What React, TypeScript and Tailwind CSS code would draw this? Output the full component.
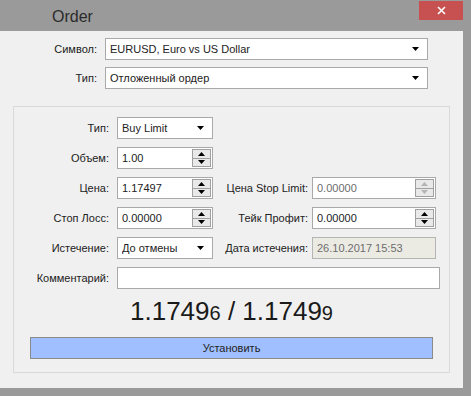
import React from 'react';

const font = { fontFamily: '"Liberation Sans", Arial, sans-serif' };

const Arrow = ({ up = false, color = '#000' }: { up?: boolean; color?: string }) => (
  <svg width="7" height="4" viewBox="0 0 7 4">
    <polygon points={up ? '0,4 7,4 3.5,0' : '0,0 7,0 3.5,4'} fill={color} />
  </svg>
);

const Select = ({ value, className = '' }: { value: string; className?: string }) => (
  <div className={`h-[22px] border border-[#a9a9a9] bg-white flex items-center pl-[4px] pr-[8px] ${className}`}>
    <span className="flex-1 truncate">{value}</span>
    <Arrow />
  </div>
);

const Spin = ({ disabled = false }: { disabled?: boolean }) => {
  const c = disabled ? '#b5b5b5' : '#000';
  return (
    <div className="w-[19px] h-[18px] border border-[#a0a0a0] bg-[#e9e9e9] flex flex-col">
      <div className="flex-1 flex items-center justify-center border-b border-[#a0a0a0]">
        <Arrow up color={c} />
      </div>
      <div className="flex-1 flex items-center justify-center">
        <Arrow color={c} />
      </div>
    </div>
  );
};

const SpinInput = ({ value, disabled = false, className = '' }: { value: string; disabled?: boolean; className?: string }) => (
  <div className={`h-[22px] border border-[#a9a9a9] bg-white flex items-center pl-[4px] pr-[1px] ${className}`}>
    <span className={`flex-1 ${disabled ? 'text-[#6d6d6d]' : ''}`}>{value}</span>
    <Spin disabled={disabled} />
  </div>
);

const Label = ({ children, className = '' }: { children: React.ReactNode; className?: string }) => (
  <div className={`text-right ${className}`}>{children}</div>
);

export default function App() {
  return (
    <div className="w-[471px] h-[396px] bg-[#9a9a9a] flex flex-col text-[11px] text-[#222]" style={font}>
      {/* title bar */}
      <div className="h-[31px] flex items-start">
        <div className="ml-[52px] mt-[5px] text-[16px] text-[#2b2b2b]">Order</div>
        <div className="ml-auto mr-[8px] mt-[1px] w-[44px] h-[19px] bg-[#c75050] flex items-center justify-center">
          <svg width="9" height="9" viewBox="0 0 9 9">
            <path d="M1 1L8 8M8 1L1 8" stroke="#fff" strokeWidth="1.6" />
          </svg>
        </div>
      </div>

      {/* client */}
      <div className="w-[463px] h-[357px] bg-[#f0f0f0] flex flex-col pt-[7px]">
        <div className="flex items-center">
          <Label className="w-[97px]">Символ:</Label>
          <Select value="EURUSD, Euro vs US Dollar" className="ml-[8px] w-[323px]" />
        </div>
        <div className="flex items-center mt-[7px]">
          <Label className="w-[97px]">Тип:</Label>
          <Select value="Отложенный ордер" className="ml-[8px] w-[323px]" />
        </div>

        {/* group */}
        <div className="mx-[13px] mt-[17px] h-[267px] border border-[#d9d9d9] flex flex-col pt-[10px]">
          <div className="flex items-center">
            <Label className="w-[95px]">Тип:</Label>
            <Select value="Buy Limit" className="ml-[8px] w-[96px]" />
          </div>
          <div className="flex items-center mt-[8px]">
            <Label className="w-[95px]">Объем:</Label>
            <SpinInput value="1.00" className="ml-[8px] w-[96px]" />
          </div>
          <div className="flex items-center mt-[8px]">
            <Label className="w-[95px]">Цена:</Label>
            <SpinInput value="1.17497" className="ml-[8px] w-[96px]" />
            <Label className="flex-1 pr-[4px]">Цена Stop Limit:</Label>
            <SpinInput value="0.00000" disabled className="w-[124px] mr-[13px]" />
          </div>
          <div className="flex items-center mt-[8px]">
            <Label className="w-[95px]">Стоп Лосс:</Label>
            <SpinInput value="0.00000" className="ml-[8px] w-[96px]" />
            <Label className="flex-1 pr-[4px]">Тейк Профит:</Label>
            <SpinInput value="0.00000" className="w-[124px] mr-[13px]" />
          </div>
          <div className="flex items-center mt-[8px]">
            <Label className="w-[95px]">Истечение:</Label>
            <Select value="До отмены" className="ml-[8px] w-[96px]" />
            <Label className="flex-1 pr-[4px]">Дата истечения:</Label>
            <div className="w-[124px] mr-[13px] h-[22px] border border-[#b5b5b5] bg-[#ebebe4] flex items-center pl-[4px] text-[#6d6d6d]">
              26.10.2017 15:53
            </div>
          </div>
          <div className="flex items-center mt-[8px]">
            <Label className="w-[95px]">Комментарий:</Label>
            <div className="ml-[8px] w-[323px] h-[22px] border border-[#a9a9a9] bg-white" />
          </div>

          <div className="h-[48px] flex items-baseline justify-center pt-[9px] text-[26px] leading-none text-[#1a1a1a]">
            <span>1.1749</span>
            <span className="text-[20px]">6</span>
            <span className="whitespace-pre"> / 1.1749</span>
            <span className="text-[20px]">9</span>
          </div>

          <div className="mx-[16px] h-[22px] border border-[#8a8a8a] bg-[#9fbfff] flex items-center justify-center">
            Установить
          </div>
        </div>
      </div>
    </div>
  );
}
